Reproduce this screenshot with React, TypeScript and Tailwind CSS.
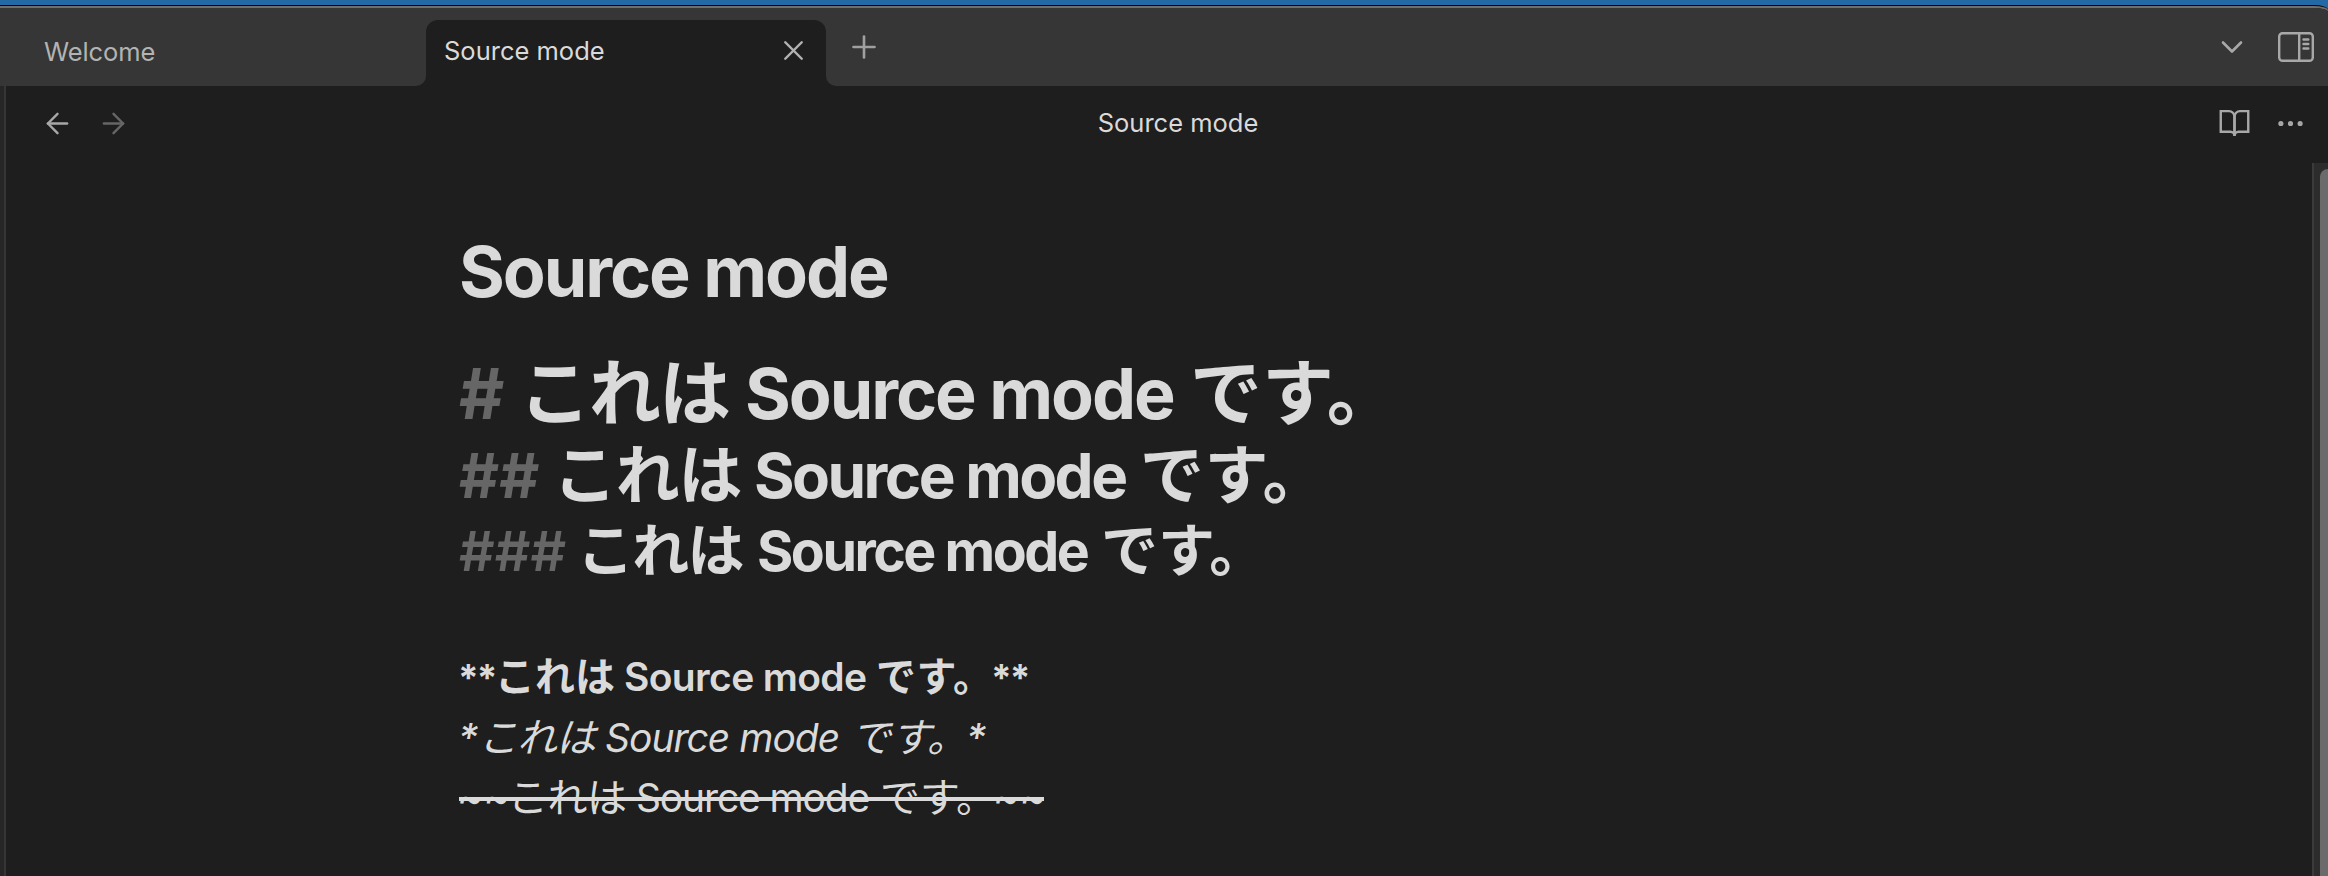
import React from 'react';
import { ArrowLeft, ArrowRight, ChevronDown, MoreHorizontal, Plus, X } from 'lucide-react';

const JA = "font-['Noto_Sans_CJK_JP',sans-serif]";

type Piece = { text: string; className: string; ja?: boolean };

function Line({ pieces, className }: { pieces: Piece[]; className: string }) {
  return (
    <div className={`flex items-baseline whitespace-nowrap ${className}`}>
      {pieces.map((piece, i) => (
        <span key={i} className={`shrink-0 ${piece.ja ? JA : ''} ${piece.className}`}>
          {piece.text}
        </span>
      ))}
    </div>
  );
}

function BookOpen() {
  return (
    <svg width="33" height="33" viewBox="0 0 24 24" fill="none" stroke="currentColor" strokeWidth="1.75" strokeLinecap="round">
      <path d="M2 3h6a4 4 0 0 1 4 4v14a3 3 0 0 0-3-3H2z" />
      <path d="M22 3h-6a4 4 0 0 0-4 4v14a3 3 0 0 1 3-3h7z" />
    </svg>
  );
}

function SidebarIcon() {
  return (
    <svg width="36" height="30" viewBox="0 0 36 30" fill="none" stroke="currentColor" strokeWidth="2.4" strokeLinecap="round">
      <rect x="1.2" y="1.2" width="33.6" height="27.6" rx="3.4" />
      <path d="M21.2 1.5v27" />
      <path d="M25.5 7.5h4.8M25.5 12h4.8M25.5 16.5h4.8" />
    </svg>
  );
}

function TabBar() {
  return (
    <div className="flex h-[78px] shrink-0 bg-[#1e1e1e]">
      <div className="flex w-[426px] items-center rounded-br-[10px] bg-[#363636] pb-[6px] pl-[44px] pt-[15px] text-[25.5px] leading-[30px] tracking-[-0.1px] text-[#b3b3b3]">
        Welcome
      </div>
      <div className="w-[400px] bg-[#363636] pt-3">
        <div className="flex h-[66px] items-center justify-between rounded-t-[12px] bg-[#1e1e1e] pb-[5px] pl-[18px] pr-[16px] text-[25.5px] text-[#dadada]">
          <span className="leading-[30px]">Source mode</span>
          <X size={33} strokeWidth={1.75} className="text-[#b3b3b3]" />
        </div>
      </div>
      <div className="flex flex-1 items-center justify-between rounded-bl-[10px] bg-[#363636] pl-[20px] pr-[14px] text-[#a0a0a0]">
        <Plus size={36} strokeWidth={1.75} />
        <div className="flex items-center gap-[28px] text-[#a8a8a8]">
          <ChevronDown size={36} strokeWidth={1.75} />
          <SidebarIcon />
        </div>
      </div>
    </div>
  );
}

function ViewHeader() {
  return (
    <div className="grid h-[77px] shrink-0 grid-cols-[1fr_auto_1fr] items-center pb-[3px] pl-[35px] pr-[21px] text-[#a8a8a8]">
      <div className="flex gap-[23px]">
        <ArrowLeft size={33} strokeWidth={1.75} />
        <ArrowRight size={33} strokeWidth={1.75} className="text-[#666666]" />
      </div>
      <div className="pl-[8px] text-[25.5px] leading-[30px] text-[#dadada]">Source mode</div>
      <div className="flex justify-end gap-[23px]">
        <BookOpen />
        <MoreHorizontal size={33} strokeWidth={1.75} />
      </div>
    </div>
  );
}

function Editor() {
  return (
    <div className="flex-1 pl-[453px] pt-[66px] text-[#dadada]">
      <h1 className="mb-[30px] h-[86px] text-[70px] font-bold leading-[86px] tracking-[-2.05px]">Source mode</h1>
      <Line
        className="h-[87px] text-[70px] font-bold leading-[86px]"
        pieces={[
          { text: '#', className: 'w-[60px] text-[#666666]' },
          { text: 'これは', ja: true, className: 'w-[226px] text-[72px] tracking-[-2px] leading-[86px]' },
          { text: 'Source mode', className: 'w-[445px] tracking-[-2.05px]' },
          { text: 'です。', ja: true, className: 'text-[72px] leading-[86px]' },
        ]}
      />
      <Line
        className="h-[77px] text-[62px] font-bold leading-[77px]"
        pieces={[
          { text: '##', className: 'w-[94px] text-[#666666]' },
          { text: 'これは', ja: true, className: 'w-[201px] text-[64px] tracking-[-1.3px] leading-[77px]' },
          { text: 'Source mode', className: 'w-[386px] tracking-[-2.56px]' },
          { text: 'です。', ja: true, className: 'text-[64px] tracking-[0.5px] leading-[77px]' },
        ]}
      />
      <Line
        className="mb-[61px] h-[74px] text-[55.5px] font-bold leading-[74px]"
        pieces={[
          { text: '###', className: 'w-[118px] font-semibold text-[#666666]' },
          { text: 'これは', ja: true, className: 'w-[180px] text-[57px] tracking-[-1.75px] leading-[74px]' },
          { text: 'Source mode', className: 'w-[344px] tracking-[-2.5px]' },
          { text: 'です。', ja: true, className: 'text-[57px] leading-[74px]' },
        ]}
      />
      <Line
        className="h-[61px] text-[39px] font-semibold leading-[60px]"
        pieces={[
          { text: '**', className: '-ml-px w-[37px] text-[37px] font-bold tracking-[-2px]' },
          { text: 'これは', ja: true, className: 'w-[129px] text-[40px] font-bold leading-[60px]' },
          { text: 'Source mode', className: 'w-[252px] tracking-[-0.64px]' },
          { text: 'です。', ja: true, className: 'w-[115px] text-[40px] font-bold tracking-[0.5px] leading-[60px]' },
          { text: '**', className: 'text-[37px] font-bold tracking-[-2px]' },
        ]}
      />
      <Line
        className="h-[60px] text-[39px] italic leading-[60px]"
        pieces={[
          { text: '*', className: '-ml-px w-[20px] font-medium' },
          { text: 'これは', ja: true, className: 'w-[127px] text-[40px] tracking-[-1px] leading-[60px]' },
          { text: 'Source mode', className: 'w-[246px] tracking-[-1px]' },
          { text: 'です。', ja: true, className: 'w-[115px] text-[40px] leading-[60px]' },
          { text: '*', className: 'font-medium' },
        ]}
      />
      <div className="relative">
        <Line
          className="-ml-[2px] h-[60px] text-[39px] leading-[60px]"
          pieces={[
            { text: '~~', className: 'w-[51px] text-[40px]' },
            { text: 'これは', ja: true, className: 'w-[128px] text-[40px] tracking-[-0.5px] leading-[60px]' },
            { text: 'Source mode', className: 'w-[244px] tracking-[-1.15px]' },
            { text: 'です。', ja: true, className: 'w-[113px] text-[40px] leading-[60px]' },
            { text: '~~', className: 'text-[40px]' },
          ]}
        />
        <div className="absolute left-0 top-[32px] h-[4px] w-[585px] bg-[#dadada]" />
      </div>
    </div>
  );
}

export default function App() {
  return (
    <div className="flex h-[876px] w-full flex-col overflow-hidden bg-[#2369a5] pt-[5px] font-['Inter',sans-serif]">
      <div className="flex flex-1 flex-col overflow-hidden rounded-tr-[14px_5px] border-t border-black bg-[#6e6e6e]">
        <div className="mt-[2px] flex flex-1 flex-col overflow-hidden rounded-tr-[14px_4px]">
          <TabBar />
          <div className="flex flex-1 bg-[#1e1e1e]">
            <div className="w-[6px] border-r-2 border-[#363636] bg-[#262626]" />
            <div className="flex min-w-0 flex-1 flex-col">
              <ViewHeader />
              <div className="flex flex-1">
                <Editor />
                <div className="flex w-[16px] border-l-2 border-[#3b3b3b] bg-[#2c2c2c] pl-[6px] pt-[6px]">
                  <div className="flex-1 rounded-tl-[8px] bg-[#6b6b6b]" />
                </div>
              </div>
            </div>
          </div>
        </div>
      </div>
    </div>
  );
}
